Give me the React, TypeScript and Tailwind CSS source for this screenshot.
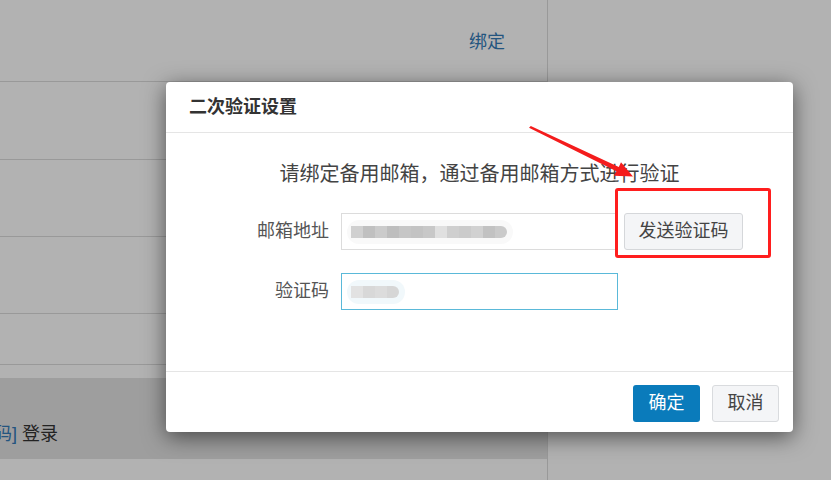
const font = {
  fontFamily: '"Liberation Sans", "Noto Sans CJK SC", sans-serif',
};

const emailBlocks = [
  "#d0d0d0",
  "#c0c0c0",
  "#cbcbcb",
  "#bebebe",
  "#c6c6c6",
  "#c3c3c3",
  "#c8c8c8",
  "#e0e0e0",
  "#cfcfcf",
  "#cbcbcb",
  "#d1d1d1",
  "#c2c2c2",
  "#cacaca",
];

const codeBlocks = ["#e2e2e2", "#d8d8d8", "#dcdcdc", "#d6d6d6"];

// pixelated (blurred) value shown inside an input
const Mosaic = ({ blocks, halo }: { blocks: string[]; halo: string }) => (
  <div className="relative ml-[9px] flex items-center">
    <div
      className="absolute -left-[4px] -right-[6px] -top-[6px] -bottom-[6px] rounded-full"
      style={{ backgroundColor: halo }}
    />
    <div className="relative flex h-[12px] overflow-hidden rounded-r-[6px]">
      {blocks.map((c, i) => (
        <div key={i} className="h-full w-[12px]" style={{ backgroundColor: c }} />
      ))}
    </div>
  </div>
);

const BackgroundPage = () => (
  <div className="flex h-full w-full bg-white">
    <div className="flex w-[548px] flex-col border-r border-[#dcdcdc]">
      <div className="flex h-[82px] items-center justify-end border-b border-[#dcdcdc] pr-[42px] pt-[4px]">
        <span className="text-[18px] text-[#337ab7]">绑定</span>
      </div>
      <div className="h-[78px] border-b border-[#dcdcdc]" />
      <div className="h-[77px] border-b border-[#dcdcdc]" />
      <div className="h-[77px] border-b border-[#dcdcdc]" />
      <div className="h-[51px] border-b border-[#dcdcdc]" />
      <div className="h-[13px]" />
      <div className="flex h-[81px] items-end bg-[#e3e3e3] pb-[11px]">
        <span className="-ml-[6px] text-[18px] text-[#337ab7]">码]</span>
        <span className="ml-[5px] text-[18px] text-[#333]">登录</span>
      </div>
    </div>
    <div className="flex-1" />
  </div>
);

const Modal = () => (
  <div className="absolute left-[166px] top-[82px] flex h-[350px] w-[627px] flex-col rounded-[4px] bg-white shadow-[0_5px_22px_rgba(0,0,0,0.55)]">
    <div className="flex h-[51px] items-center border-b border-[#e5e5e5] pl-[23px]">
      <span className="text-[18px] font-bold text-[#333]">二次验证设置</span>
    </div>

    <div className="flex flex-1 flex-col pt-[27px]">
      <p className="text-center text-[20px] leading-[28px] text-[#444]">
        请绑定备用邮箱，通过备用邮箱方式进行验证
      </p>

      <div className="mt-[25px] flex items-center">
        <label className="w-[163px] text-right text-[18px] text-[#555]">邮箱地址</label>
        <div className="ml-[12px] flex h-[37px] w-[275px] items-center border border-[#dcdcdc]">
          <Mosaic blocks={emailBlocks} halo="#f9f9f9" />
        </div>
        <button className="ml-[8px] h-[37px] w-[119px] rounded-[3px] border border-[#d5d7da] bg-[#f4f5f7] text-[18px] text-[#444]">
          发送验证码
        </button>
      </div>

      <div className="mt-[23px] flex items-center">
        <label className="w-[163px] text-right text-[18px] text-[#555]">验证码</label>
        <div className="ml-[12px] flex h-[37px] w-[277px] items-center border border-[#5ab9d9]">
          <Mosaic blocks={codeBlocks} halo="#f1f8fb" />
        </div>
      </div>
    </div>

    <div className="flex h-[61px] justify-end gap-[12px] border-t border-[#e5e5e5] pr-[14px] pt-[13px]">
      <button className="h-[37px] w-[67px] rounded-[3px] bg-[#0a7bbb] text-[18px] text-white">
        确定
      </button>
      <button className="h-[37px] w-[67px] rounded-[3px] border border-[#d9dbde] bg-[#f4f5f7] text-[18px] text-[#444]">
        取消
      </button>
    </div>
  </div>
);

// red annotation: arrow + highlight box drawn on top of the screenshot
const Annotation = () => (
  <>
    <div className="absolute left-[615px] top-[188px] h-[70px] w-[156px] rounded-[3px] border-[3px] border-[#ff1e1e]" />
    <svg className="pointer-events-none absolute left-0 top-0" width="831" height="480">
      <polygon
        points="529,127.8 530.8,126 618.8,167 621,162.2 633,176.5 614,175.8 616.4,171.2"
        fill="#f41c1c"
      />
    </svg>
  </>
);

export default function App() {
  return (
    <div className="relative h-[480px] w-[831px] overflow-hidden" style={font}>
      <BackgroundPage />
      <div className="absolute inset-0 bg-black/30" />
      <Modal />
      <Annotation />
    </div>
  );
}
